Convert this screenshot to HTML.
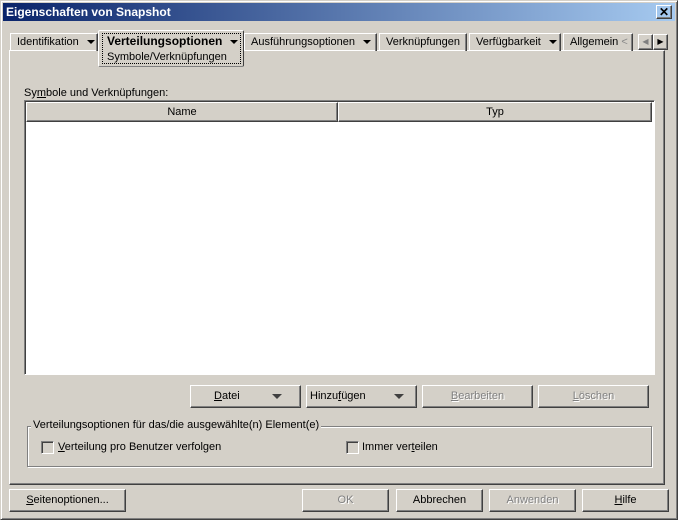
<!DOCTYPE html><html><head><meta charset="utf-8"><style>
body{margin:0;width:678px;height:520px;background:#d4d0c8;font:11px "Liberation Sans",sans-serif;color:#000;position:relative;overflow:hidden}
.a{position:absolute}
.win{left:0;top:0;width:676px;height:518px;border:1px solid;border-color:#d4d0c8 #404040 #404040 #d4d0c8;box-shadow:inset 1px 1px #fff,inset -1px -1px #808080}
.title{left:3px;top:3px;width:672px;height:18px;background:linear-gradient(90deg,#0a246a,#a6caf0);color:#fff;font-weight:bold;font-size:12px;line-height:18px;padding-left:3px;box-sizing:border-box}
.btn{box-sizing:border-box;border:1px solid;border-color:#fff #404040 #404040 #fff;box-shadow:inset -1px -1px #808080;text-align:center;line-height:21px}
.dis{color:#808080;text-shadow:1px 1px #fff}
.tab{top:33px;height:18px;box-sizing:border-box;border:1px solid;border-color:#fff #404040 transparent #fff;border-bottom:none;line-height:16px;padding-left:6px;box-shadow:inset -1px 0 #808080}
.tri{display:inline-block;width:0;height:0;border-left:4px solid transparent;border-right:4px solid transparent;border-top:4px solid #000;vertical-align:middle;margin-left:8px}
u{text-decoration:underline}
.cb{width:13px;height:13px;box-sizing:border-box;border:1px solid;border-color:#808080 #fff #fff #808080;box-shadow:inset 1px 1px #404040;background:#d4d0c8}
</style></head><body>
<div class="a win"></div>
<div class="a title">Eigenschaften von Snapshot</div>
<div class="a btn" style="left:656px;top:5px;width:16px;height:14px;line-height:12px;font-size:12px;font-weight:bold">✕</div>
<div class="a" style="left:9px;top:50px;width:656px;height:435px;box-sizing:border-box;border:1px solid;border-color:#fff #404040 #404040 #fff;box-shadow:inset -1px -1px #808080"></div>
<div class="a tab" style="left:10px;width:88px">Identifikation<span class="tri"></span></div>
<div class="a tab" style="left:244px;width:133px">Ausführungsoptionen<span class="tri"></span></div>
<div class="a tab" style="left:379px;width:88px">Verknüpfungen</div>
<div class="a tab" style="left:469px;width:92px">Verfügbarkeit<span class="tri"></span></div>
<div class="a tab" style="left:563px;width:70px;overflow:hidden">Allgemein <span style="color:#888">&lt;</span></div>
<div class="a btn" style="left:638px;top:34px;width:15px;height:16px;line-height:14px;font-size:8px;color:#808080">◀</div>
<div class="a btn" style="left:653px;top:34px;width:15px;height:16px;line-height:14px;font-size:8px">▶</div>
<div class="a" style="left:98px;top:30px;width:146px;height:37px;background:#d4d0c8;box-sizing:border-box;border:1px solid;border-color:#fff #404040 #808080 #fff;border-radius:2px"></div>
<div class="a" style="left:102px;top:33px;width:139px;height:31px;border:1px dotted #000;box-sizing:border-box;padding-left:4px;line-height:15px"><b style="font-size:12px">Verteilungsoptionen</b><span class="tri"></span><br>Symbole/Verknüpfungen</div>
<div class="a" style="left:24px;top:87px">Sy<u>m</u>bole und Verknüpfungen:</div>
<div class="a" style="left:24px;top:100px;width:631px;height:275px;background:#fff;box-sizing:border-box;border:1px solid;border-color:#808080 #fff #fff #808080;box-shadow:inset 1px 1px #404040"></div>
<div class="a btn" style="left:26px;top:102px;width:312px;height:20px;line-height:18px;background:#d4d0c8">Name</div>
<div class="a btn" style="left:338px;top:102px;width:314px;height:20px;line-height:18px;background:#d4d0c8">Typ</div>
<div class="a btn" style="left:190px;top:385px;width:111px;height:23px;text-align:left;padding-left:23px"><u>D</u>atei<span class="tri" style="margin-left:32px;border-width:5px 5px 0;border-top-color:#404040"></span></div>
<div class="a btn" style="left:306px;top:385px;width:111px;height:23px;text-align:left;padding-left:3px">Hinzu<u>f</u>ügen<span class="tri" style="margin-left:28px;border-width:5px 5px 0;border-top-color:#404040"></span></div>
<div class="a btn dis" style="left:422px;top:385px;width:111px;height:23px"><u>B</u>earbeiten</div>
<div class="a btn dis" style="left:538px;top:385px;width:111px;height:23px"><u>L</u>öschen</div>
<div class="a" style="left:27px;top:426px;width:625px;height:41px;box-sizing:border-box;border:1px solid #808080;box-shadow:1px 1px #fff,inset 1px 1px #fff"></div>
<div class="a" style="left:31px;top:419px;background:#d4d0c8;padding:0 2px">Verteilungsoptionen für das/die ausgewählte(n) Element(e)</div>
<div class="a cb" style="left:41px;top:441px"></div>
<div class="a" style="left:58px;top:441px"><u>V</u>erteilung pro Benutzer verfolgen</div>
<div class="a cb" style="left:346px;top:441px"></div>
<div class="a" style="left:362px;top:441px">Immer ver<u>t</u>eilen</div>
<div class="a btn" style="left:9px;top:489px;width:117px;height:23px"><u>S</u>eitenoptionen...</div>
<div class="a btn dis" style="left:302px;top:489px;width:87px;height:23px">OK</div>
<div class="a btn" style="left:396px;top:489px;width:87px;height:23px">Abbrechen</div>
<div class="a btn dis" style="left:489px;top:489px;width:87px;height:23px">Anwenden</div>
<div class="a btn" style="left:582px;top:489px;width:87px;height:23px"><u>H</u>ilfe</div>
</body></html>
